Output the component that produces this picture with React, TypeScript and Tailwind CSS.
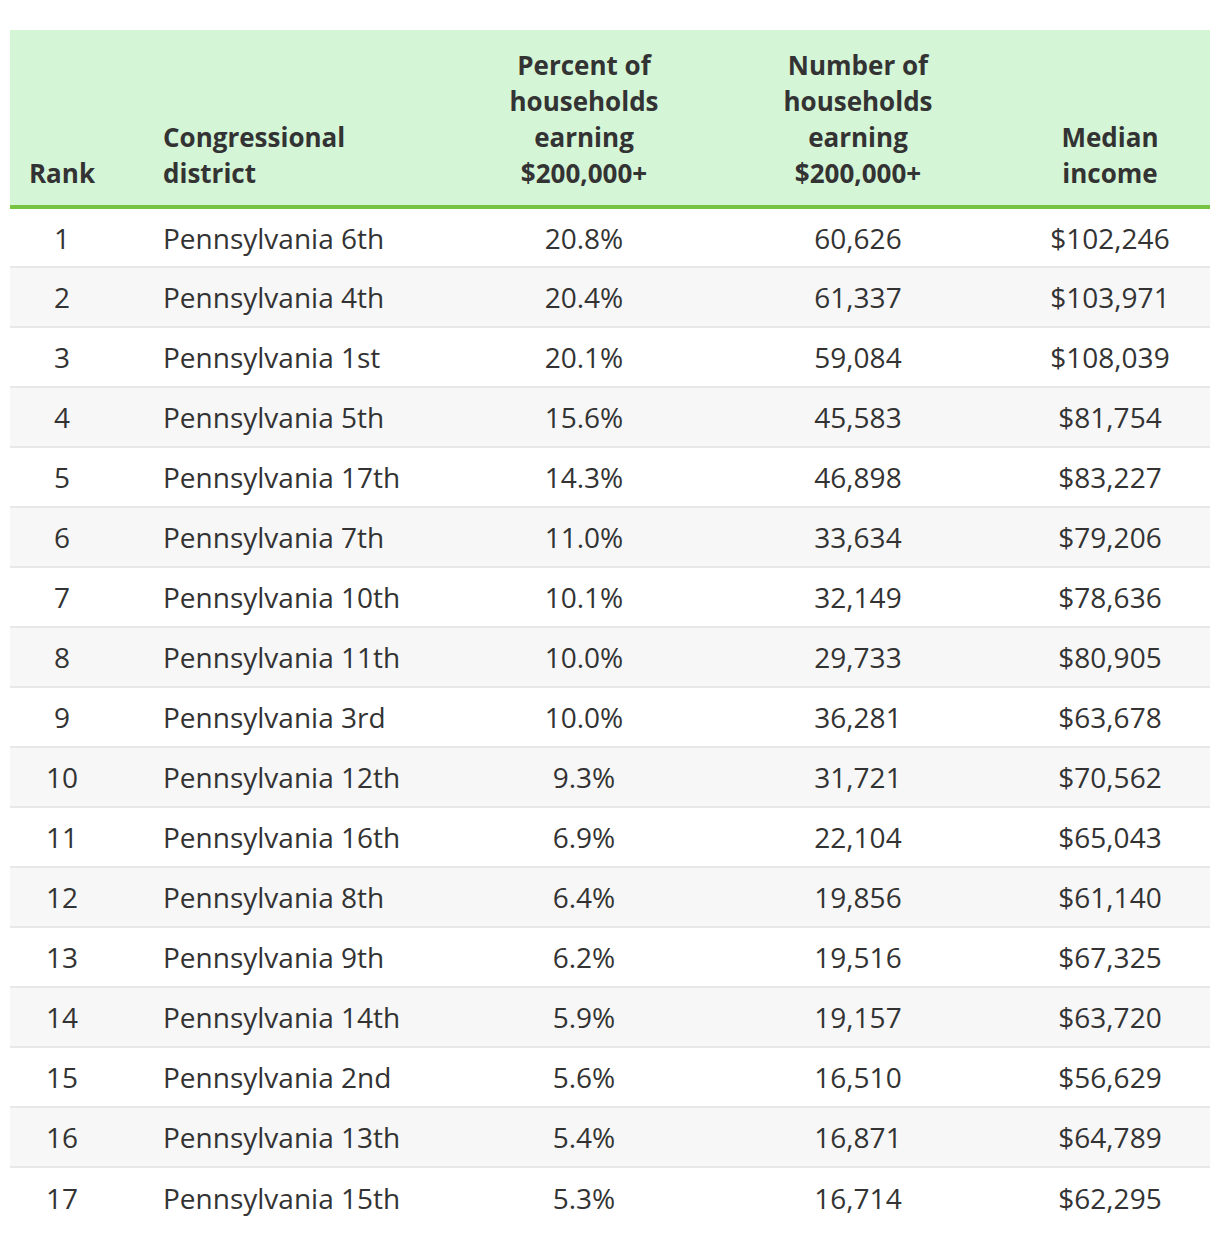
import React from 'react';

const rows: [number, string, string, string, string][] = [
  [1, 'Pennsylvania 6th', '20.8%', '60,626', '$102,246'],
  [2, 'Pennsylvania 4th', '20.4%', '61,337', '$103,971'],
  [3, 'Pennsylvania 1st', '20.1%', '59,084', '$108,039'],
  [4, 'Pennsylvania 5th', '15.6%', '45,583', '$81,754'],
  [5, 'Pennsylvania 17th', '14.3%', '46,898', '$83,227'],
  [6, 'Pennsylvania 7th', '11.0%', '33,634', '$79,206'],
  [7, 'Pennsylvania 10th', '10.1%', '32,149', '$78,636'],
  [8, 'Pennsylvania 11th', '10.0%', '29,733', '$80,905'],
  [9, 'Pennsylvania 3rd', '10.0%', '36,281', '$63,678'],
  [10, 'Pennsylvania 12th', '9.3%', '31,721', '$70,562'],
  [11, 'Pennsylvania 16th', '6.9%', '22,104', '$65,043'],
  [12, 'Pennsylvania 8th', '6.4%', '19,856', '$61,140'],
  [13, 'Pennsylvania 9th', '6.2%', '19,516', '$67,325'],
  [14, 'Pennsylvania 14th', '5.9%', '19,157', '$63,720'],
  [15, 'Pennsylvania 2nd', '5.6%', '16,510', '$56,629'],
  [16, 'Pennsylvania 13th', '5.4%', '16,871', '$64,789'],
  [17, 'Pennsylvania 15th', '5.3%', '16,714', '$62,295'],
];

export default function App() {
  return (
    <div className="bg-white px-[10px] pt-[30px] pb-[8px] font-['Open_Sans',sans-serif] text-[#333]">
      <table className="w-[1200px] table-fixed border-collapse">
        <colgroup>
          <col className="w-[104px]" />
          <col className="w-[348px]" />
          <col className="w-[244px]" />
          <col className="w-[304px]" />
          <col className="w-[200px]" />
        </colgroup>
        <thead>
          <tr className="bg-[#d5f5d7] border-b-4 border-[#76c442] text-[26px] leading-[36px] font-bold">
            <th className="h-[177px] pt-[17px] pb-[14px] align-bottom text-center">Rank</th>
            <th className="pb-[14px] pl-[49px] align-bottom text-left">
              Congressional
              <br />
              district
            </th>
            <th className="pb-[14px] align-bottom text-center">
              Percent of
              <br />
              households
              <br />
              earning
              <br />
              $200,000+
            </th>
            <th className="pb-[14px] align-bottom text-center">
              Number of
              <br />
              households
              <br />
              earning
              <br />
              $200,000+
            </th>
            <th className="pb-[14px] align-bottom text-center">
              Median
              <br />
              income
            </th>
          </tr>
        </thead>
        <tbody className="text-[28px]">
          {rows.map(([rank, district, pct, count, income], i) => (
            <tr
              key={rank}
              className={`h-[60px] ${i < rows.length - 1 ? 'border-b-2 border-[#e8e8e8]' : ''} ${i % 2 === 1 ? 'bg-[#f7f7f7]' : 'bg-white'}`}
            >
              <td className="text-center">{rank}</td>
              <td className="pl-[49px]">{district}</td>
              <td className="text-center">{pct}</td>
              <td className="text-center">{count}</td>
              <td className="text-center">{income}</td>
            </tr>
          ))}
        </tbody>
      </table>
    </div>
  );
}
